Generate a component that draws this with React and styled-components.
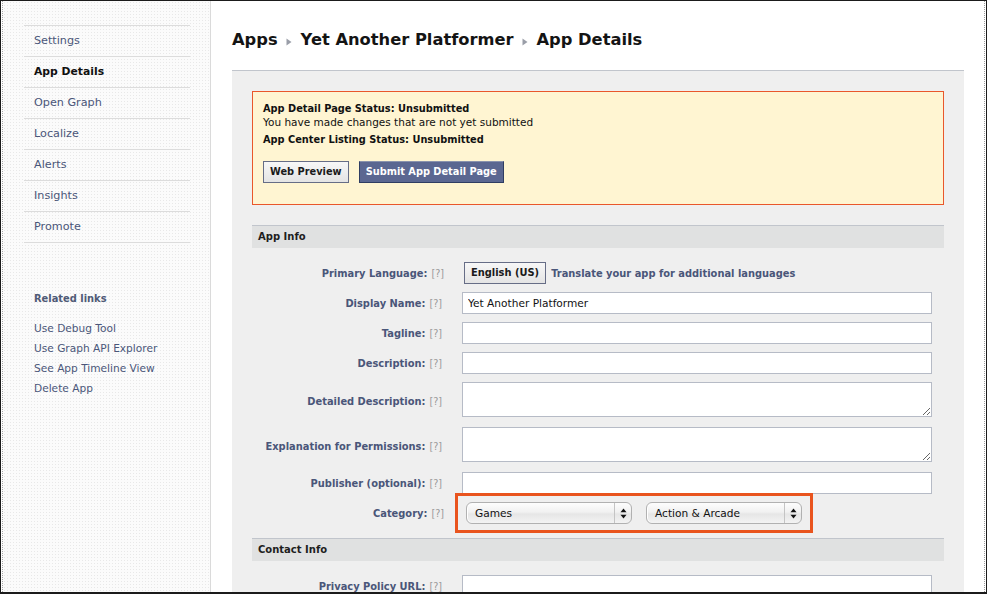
import React from "react";
import styled, { createGlobalStyle } from "styled-components";

const Global = createGlobalStyle`
  html, body { margin: 0; padding: 0; background: #fff; }
  body { font-family: "DejaVu Sans", "Liberation Sans", sans-serif; overflow: hidden; }
  *, *::before, *::after { box-sizing: border-box; }
`;

const SLATE = "#4a5679";

const Frame = styled.div`
  width: 987px;
  height: 594px;
  display: flex;
  border-top: 1px solid #1b1b1b;
  border-left: 1px solid #1b1b1b;
  border-right: 1px solid #1b1b1b;
  border-bottom: 2px solid #1b1b1b;
  padding: 0 1px 0 1px;
  overflow: hidden;
`;

const Sidebar = styled.aside`
  width: 209px;
  flex: none;
  border-left: 1px dotted #a8a8a8;
  border-right: 1px solid #dadada;
  background-color: #fbfbfb;
  background-image: radial-gradient(#e8e8e8 0.6px, transparent 0.8px);
  background-size: 3px 3px;
  padding: 24px 0 0 21px;
`;

const NavList = styled.ul`
  list-style: none;
  margin: 0;
  padding: 0;
  width: 166px;
  border-top: 1px solid #dcdcdc;
`;

const NavItem = styled.li`
  height: 31px;
  line-height: 30px;
  border-bottom: 1px solid #dcdcdc;
  padding-left: 10px;
  font-size: ${(p) => (p.$active ? "10.8px" : "11.2px")};
  font-weight: ${(p) => (p.$active ? 700 : 400)};
  color: ${(p) => (p.$active ? "#111" : SLATE)};
`;

const RelatedHeading = styled.div`
  margin: 49px 0 0 10px;
  line-height: 14px;
  font-size: 9.9px;
  font-weight: 700;
  color: #4f5a76;
`;

const RelatedList = styled.div`
  margin: 12px 0 0 10px;
  display: flex;
  flex-direction: column;
`;

const RelatedLink = styled.a`
  line-height: 20px;
  font-size: 10.6px;
  color: ${SLATE};
  text-decoration: none;
`;

const Main = styled.main`
  flex: 1;
  display: flex;
  flex-direction: column;
  padding: 29px 20px 0 21px;
  border-right: 1px dotted #9c9c9c;
  min-width: 0;
`;

const Title = styled.h1`
  margin: 0;
  height: 20px;
  display: flex;
  align-items: center;
  gap: 8px;
  font-size: 16.3px;
  font-weight: 700;
  color: #141414;
  white-space: nowrap;
`;

const Crumb = styled.span`
  line-height: 20px;
`;

const CrumbArrow = () => (
  <svg width="6" height="8" viewBox="0 0 6 8" style={{ marginTop: 3, marginRight: 1 }}>
    <polygon points="0.5,0.5 5.5,4 0.5,7.5" fill="#9a9ea8" />
  </svg>
);

const Panel = styled.section`
  flex: 1;
  margin-top: 20px;
  background: #efefef;
  border-top: 1px solid #c1c5cc;
  padding: 20px 20px 0 20px;
`;

const Notice = styled.div`
  border: 1px solid #e9572b;
  background: #fff5d2;
  padding: 10px 10px 21px 10px;
  color: #111;
`;

const NoticeLine = styled.div`
  font-size: ${(p) => (p.$bold ? "9.8px" : "10.5px")};
  font-weight: ${(p) => (p.$bold ? 700 : 400)};
  line-height: ${(p) => p.$lh || 14}px;
  margin-top: ${(p) => p.$mt || 0}px;
  white-space: nowrap;
`;

const ButtonRow = styled.div`
  display: flex;
  gap: 10px;
  margin-top: 14px;
`;

const Button = styled.button`
  height: 22px;
  padding: 0 ${(p) => (p.$primary ? 6 : 6)}px;
  font-family: inherit;
  font-size: 9.8px;
  font-weight: 700;
  line-height: 20px;
  border: 1px solid ${(p) => (p.$primary ? "#2f3d62" : "#666d86")};
  border-top-color: ${(p) => (p.$primary ? "#8a93ad" : "#666d86")};
  color: ${(p) => (p.$primary ? "#fff" : "#1a1a1a")};
  background: ${(p) =>
    p.$primary ? "#5b6791" : "linear-gradient(#f7f7f7, #e4e4e4)"};
  cursor: pointer;
  white-space: nowrap;
`;

const SectionHeader = styled.div`
  margin-top: ${(p) => p.$mt || 0}px;
  height: 23px;
  border-top: 1px solid #c1c5cc;
  background: #e0e1e1;
  padding-left: 6px;
  line-height: 22px;
  font-size: 10px;
  font-weight: 700;
  color: #1e1e1e;
`;

const Form = styled.div`
  padding: 14px 12px 0 0;
`;

const Row = styled.div`
  display: grid;
  grid-template-columns: 192px 470px;
  column-gap: 18px;
  align-items: center;
  margin-bottom: ${(p) => p.$mb ?? 8}px;
`;

const Label = styled.div`
  text-align: right;
  padding-right: ${(p) => (p.$flush ? 0 : 2)}px;
  padding-top: ${(p) => (p.$tall ? 4 : 0)}px;
  font-size: 9.9px;
  font-weight: 700;
  color: ${SLATE};
  white-space: nowrap;
`;

const Help = styled.span`
  margin-left: 4px;
  font-weight: 400;
  font-size: 9.6px;
  color: #9a9a9a;
`;

const TextInput = styled.input`
  display: block;
  width: 470px;
  height: 22px;
  border: 1px solid #b6bbc6;
  background: #fff;
  padding: 0 5px;
  font-family: inherit;
  font-size: 10.6px;
  color: #111;
  outline: none;
`;

const TextArea = styled.textarea`
  display: block;
  width: 470px;
  height: 35px;
  border: 1px solid #b6bbc6;
  background: #fff;
  padding: 3px 5px;
  font-family: inherit;
  font-size: 10.6px;
  outline: none;
`;

const Inline = styled.div`
  display: flex;
  align-items: center;
  gap: ${(p) => p.$gap || 5}px;
  padding-left: ${(p) => p.$pl || 0}px;
`;

const LangButton = styled(Button)`
  padding: 0 6px;
  font-size: 9.9px;
`;

const TranslateLink = styled.a`
  font-size: 9.9px;
  font-weight: 700;
  color: ${SLATE};
  text-decoration: none;
  white-space: nowrap;
`;

const Highlight = styled.div`
  position: relative;
  display: flex;
  gap: 14px;
  padding-left: 4px;
  &::after {
    content: "";
    position: absolute;
    left: -7px;
    top: -9px;
    width: 358px;
    height: 40px;
    border: 3px solid #e9541e;
    pointer-events: none;
  }
`;

const SelectBox = styled.div`
  width: ${(p) => p.$w}px;
  height: 22px;
  display: flex;
  border: 1px solid #b1b1b1;
  border-radius: 6px;
  background: linear-gradient(#fdfdfd 0%, #f1f1f1 45%, #e6e6e6 55%, #f3f3f3 100%);
  box-shadow: inset 1px 0 0 #fff;
  font-size: 10.6px;
  color: #111;
`;

const SelectText = styled.span`
  flex: 1;
  padding-left: 8px;
  line-height: 20px;
  white-space: nowrap;
`;

const SelectArrows = styled.span`
  width: 17px;
  border-left: 1px solid #c4c4c4;
  display: flex;
  align-items: center;
  justify-content: center;
`;

const Select = ({ w, children }) => (
  <SelectBox $w={w}>
    <SelectText>{children}</SelectText>
    <SelectArrows>
      <svg width="7" height="11" viewBox="0 0 7 11">
        <polygon points="3.5,0.5 6.5,4.3 0.5,4.3" fill="#111" />
        <polygon points="0.5,6.7 6.5,6.7 3.5,10.5" fill="#111" />
      </svg>
    </SelectArrows>
  </SelectBox>
);

const FieldLabel = ({ children, tall, flush }) => (
  <Label $tall={tall} $flush={flush}>
    {children}
    <Help>[?]</Help>
  </Label>
);

export default function App() {
  const nav = ["Settings", "App Details", "Open Graph", "Localize", "Alerts", "Insights", "Promote"];
  const related = ["Use Debug Tool", "Use Graph API Explorer", "See App Timeline View", "Delete App"];
  return (
    <>
      <Global />
      <Frame>
        <Sidebar>
          <NavList>
            {nav.map((n) => (
              <NavItem key={n} $active={n === "App Details"}>
                {n}
              </NavItem>
            ))}
          </NavList>
          <RelatedHeading>Related links</RelatedHeading>
          <RelatedList>
            {related.map((r) => (
              <RelatedLink key={r}>{r}</RelatedLink>
            ))}
          </RelatedList>
        </Sidebar>
        <Main>
          <Title>
            <Crumb>Apps</Crumb>
            <CrumbArrow />
            <Crumb>Yet Another Platformer</Crumb>
            <CrumbArrow />
            <Crumb>App Details</Crumb>
          </Title>
          <Panel>
            <Notice>
              <NoticeLine $bold>App Detail Page Status: Unsubmitted</NoticeLine>
              <NoticeLine $lh={13}>You have made changes that are not yet submitted</NoticeLine>
              <NoticeLine $bold $mt={4}>App Center Listing Status: Unsubmitted</NoticeLine>
              <ButtonRow>
                <Button>Web Preview</Button>
                <Button $primary>Submit App Detail Page</Button>
              </ButtonRow>
            </Notice>
            <SectionHeader $mt={20}>App Info</SectionHeader>
            <Form>
              <Row>
                <FieldLabel flush>Primary Language:</FieldLabel>
                <Inline $pl={2}>
                  <LangButton>English (US)</LangButton>
                  <TranslateLink>Translate your app for additional languages</TranslateLink>
                </Inline>
              </Row>
              <Row>
                <FieldLabel>Display Name:</FieldLabel>
                <TextInput readOnly value="Yet Another Platformer" />
              </Row>
              <Row>
                <FieldLabel>Tagline:</FieldLabel>
                <TextInput readOnly value="" />
              </Row>
              <Row>
                <FieldLabel>Description:</FieldLabel>
                <TextInput readOnly value="" />
              </Row>
              <Row $mb={10}>
                <FieldLabel tall>Detailed Description:</FieldLabel>
                <TextArea readOnly value="" />
              </Row>
              <Row $mb={10}>
                <FieldLabel tall>Explanation for Permissions:</FieldLabel>
                <TextArea readOnly value="" />
              </Row>
              <Row>
                <FieldLabel>Publisher (optional):</FieldLabel>
                <TextInput readOnly value="" />
              </Row>
              <Row $mb={14}>
                <FieldLabel flush>Category:</FieldLabel>
                <Highlight>
                  <Select w={166}>Games</Select>
                  <Select w={156}>Action &amp; Arcade</Select>
                </Highlight>
              </Row>
            </Form>
            <SectionHeader>Contact Info</SectionHeader>
            <Form>
              <Row>
                <FieldLabel>Privacy Policy URL:</FieldLabel>
                <TextInput readOnly value="" />
              </Row>
            </Form>
          </Panel>
        </Main>
      </Frame>
    </>
  );
}
